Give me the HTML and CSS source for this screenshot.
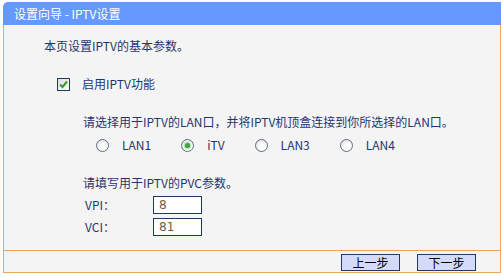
FILE: index.html
```html
<!DOCTYPE html>
<html lang="zh-CN">
<head>
  <meta charset="UTF-8">
  <title>设置向导 - IPTV设置</title>
  <link rel="stylesheet" href="styles.css">
</head>
<body>

  <div class="panel">
    <div class="panel-head">设置向导 - IPTV设置</div>

    <div class="panel-body">
      <p class="intro">本页设置IPTV的基本参数。</p>

      <label class="check-row">
        <span class="checkbox">
          <svg width="9" height="9" viewBox="0 0 9 9"><path d="M1 4.5 L3.5 7 L8 1.5" fill="none" stroke="#2f9b2f" stroke-width="2"/></svg>
        </span>
        启用IPTV功能
      </label>

      <div class="group">
        <p class="hint">请选择用于IPTV的LAN口，并将IPTV机顶盒连接到你所选择的LAN口。</p>
        <div class="radios">
          <label class="radio-opt"><span class="radio"></span>LAN1</label>
          <label class="radio-opt"><span class="radio checked"></span>iTV</label>
          <label class="radio-opt"><span class="radio"></span>LAN3</label>
          <label class="radio-opt"><span class="radio"></span>LAN4</label>
        </div>

        <p class="hint pvc">请填写用于IPTV的PVC参数。</p>
        <div class="field">
          <span class="field-label">VPI：</span>
          <input class="text-input" type="text" value="8">
        </div>
        <div class="field field-second">
          <span class="field-label">VCI：</span>
          <input class="text-input" type="text" value="81">
        </div>
      </div>
    </div>

    <div class="panel-foot">
      <button class="btn">上一步</button>
      <button class="btn">下一步</button>
    </div>
  </div>

</body>
</html>
```

FILE: styles.css
```css
* {
  box-sizing: border-box;
}

body {
  margin: 0;
  background: #fff;
  font-family: "Noto Sans CJK SC", "Noto Sans", sans-serif;
  font-size: 12px;
  line-height: 16px;
  color: #1f3570;
}

p {
  margin: 0;
}

.panel {
  width: 498px;
  margin: 2px 0 0 3px;
}

/* title bar */
.panel-head {
  height: 23px;
  line-height: 23px;
  padding-left: 11px;
  background: #6699ff;
  color: #fff;
  border-top-left-radius: 5px;
}

.panel-body {
  height: 225px;
  padding: 13px 0 0 40px;
  background: #f4f4f4;
  border-left: 1px solid #e9a65c;
  border-right: 1px solid #e9a65c;
}

.check-row {
  display: flex;
  align-items: center;
  gap: 12px;
  margin: 22px 0 0 13px;
  height: 16px;
}

.checkbox {
  width: 13px;
  height: 13px;
  display: flex;
  align-items: center;
  justify-content: center;
  border: 1px solid #1c3a66;
  background: linear-gradient(135deg, #dcdcdc, #fff);
}

.group {
  margin-left: 39px;
}

.hint {
  margin-top: 22px;
}

.radios {
  display: flex;
  margin: 7px 0 0 13px;
  height: 16px;
}

.radio-opt {
  display: flex;
  align-items: center;
  gap: 13px;
  margin-right: 30px;
}

.radio {
  width: 13px;
  height: 13px;
  border-radius: 50%;
  border: 1px solid #5d6e82;
  background: radial-gradient(circle at 60% 65%, #fff 30%, #d6d6d6 100%);
  display: flex;
  align-items: center;
  justify-content: center;
}

.radio.checked::after {
  content: "";
  width: 5px;
  height: 5px;
  border-radius: 50%;
  background: #3aa43a;
  box-shadow: 0 0 1px 1px #a8dca8;
}

.pvc {
  margin-top: 22px;
}

.field {
  display: flex;
  align-items: center;
  height: 18px;
  margin-top: 5px;
}

.field-second {
  margin-top: 4px;
}

.field-label {
  width: 70px;
  padding-left: 2px;
}

.text-input {
  width: 49px;
  height: 18px;
  padding: 0 5px;
  border: 1px solid #1c3a66;
  background: #fff;
  font-family: "DejaVu Sans", sans-serif;
  font-size: 12px;
  color: #6a5c4e;
  outline: none;
}

/* footer with step buttons */
.panel-foot {
  display: flex;
  justify-content: flex-end;
  gap: 17px;
  padding: 3px 24px 0 0;
  height: 23px;
  background: #f4f4f4;
  border: 1px solid #e9a65c;
}

.btn {
  width: 59px;
  height: 17px;
  padding: 0;
  border: 1px solid #23386e;
  background: #d5daf9;
  font-family: "Noto Sans CJK SC", sans-serif;
  font-size: 12px;
  line-height: 15px;
  color: #000;
}
```
